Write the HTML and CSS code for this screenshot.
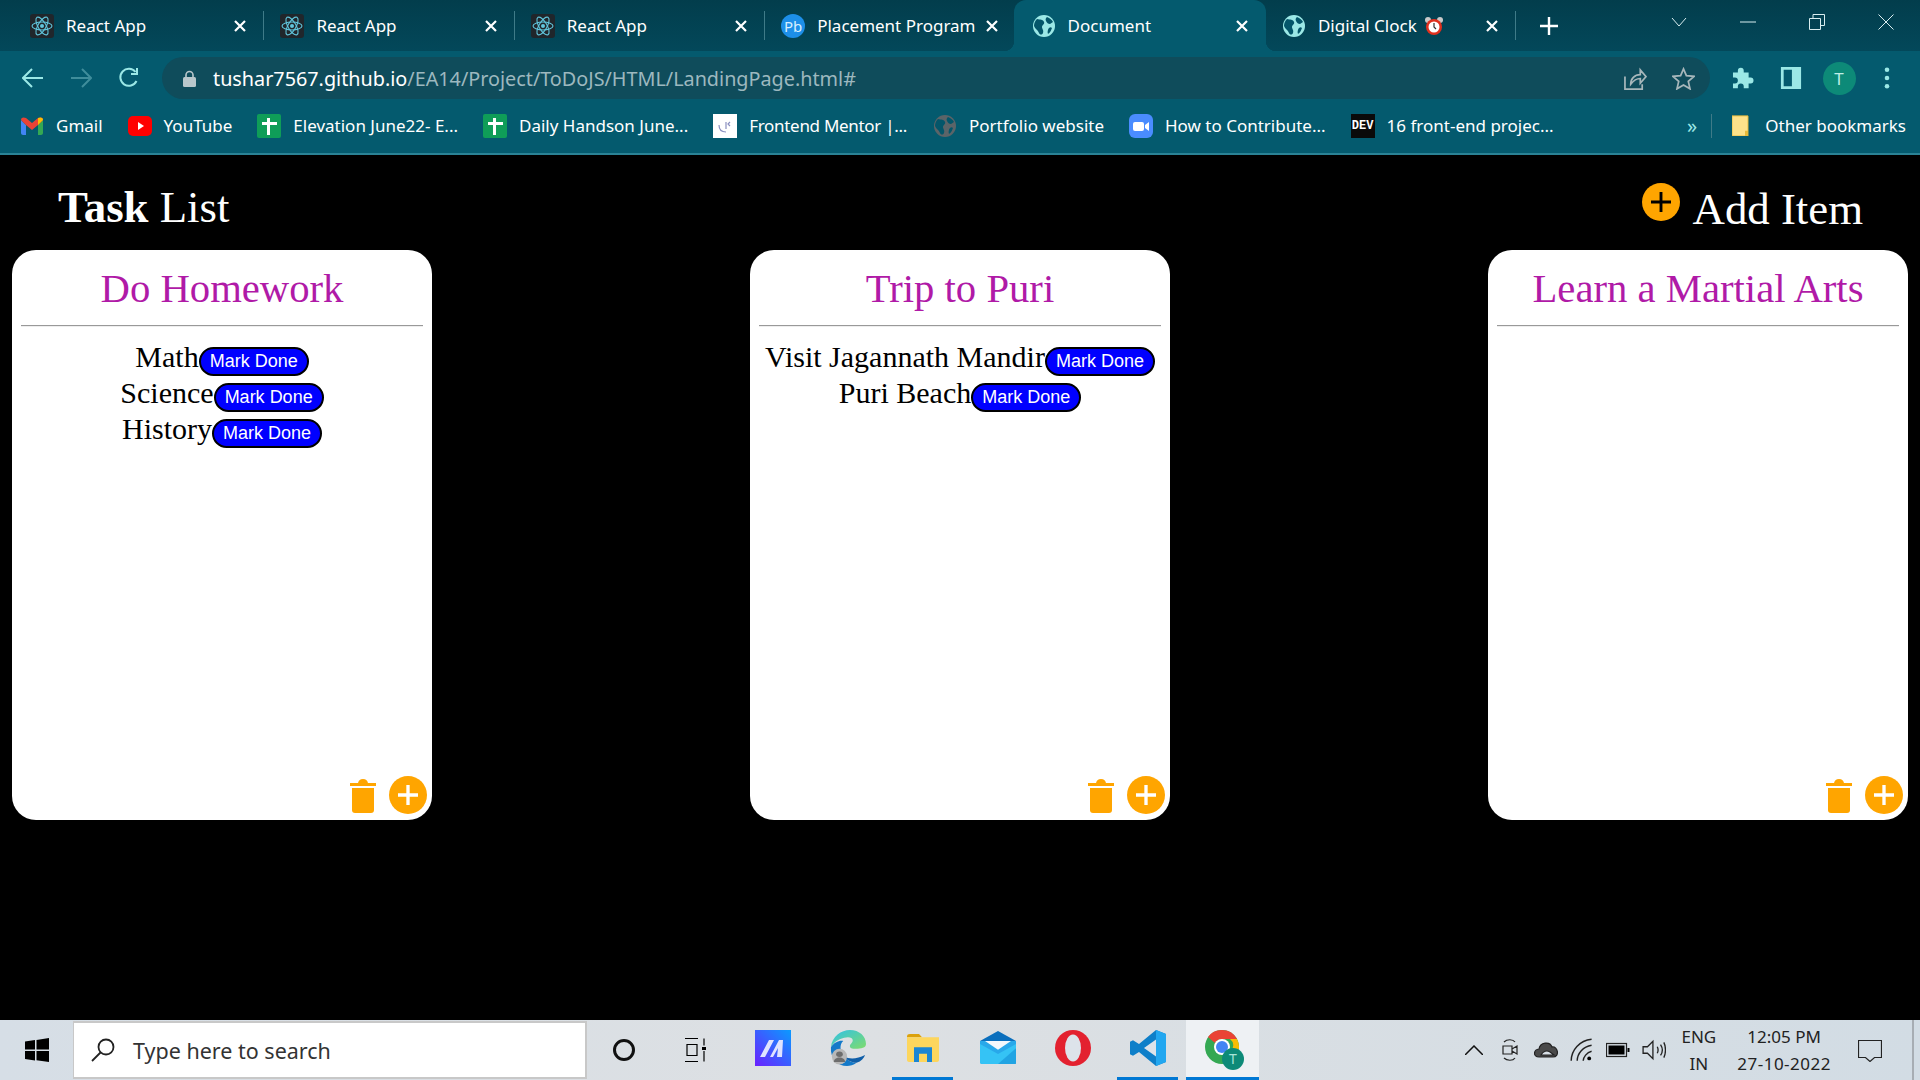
FILE: index.html
```html
<!DOCTYPE html>
<html lang="en">
<head>
    <meta charset="UTF-8">
    <title>Document</title>
    <link rel="stylesheet" href="styles.css">
</head>
<body>

    <svg class="icon-defs" width="0" height="0">
        <symbol id="react" viewBox="0 0 24 24">
            <rect width="24" height="24" rx="3" fill="#20262b"/>
            <g fill="none" stroke="#61c6dd" stroke-width="1.1">
                <ellipse cx="12" cy="12" rx="10" ry="4"/>
                <ellipse cx="12" cy="12" rx="10" ry="4" transform="rotate(60 12 12)"/>
                <ellipse cx="12" cy="12" rx="10" ry="4" transform="rotate(120 12 12)"/>
            </g>
            <circle cx="12" cy="12" r="2" fill="#61c6dd"/>
        </symbol>
        <symbol id="globe" viewBox="0 0 24 24">
            <circle cx="12" cy="12" r="11" fill="currentColor"/>
            <path d="M5 5c3 1 6 0 7 3 1 2-2 3-2 5 0 2 2 3 1 6-1 2-3 2-4 0-1-3-4-4-5-7 0-3 1-5 3-7zM15 3c3 1 5 3 6 5l-3 2c-2 0-3-1-4-3-1-2 0-3 1-4zM20 14c-1 2-1 4-4 6-1-2 0-5 1-6 1-1 2-1 3 0z" fill="#04566a"/>
        </symbol>
        <symbol id="sheet" viewBox="0 0 24 24">
            <rect width="24" height="24" rx="2" fill="#0f9d58"/>
            <rect x="5" y="8" width="15" height="3" fill="#fff"/>
            <rect x="10" y="4" width="3" height="17" fill="#fff"/>
        </symbol>
        <symbol id="trash" viewBox="0 0 26 35">
            <path d="M0 5h8c1-3 2-4 5-4s4 1 5 4h8v3H0z" fill="#ffa500"/>
            <path d="M2 10h22v22c0 2-1 3-3 3H5c-2 0-3-1-3-3z" fill="#ffa500"/>
        </symbol>
    </svg>

    <header class="browser">
        <div class="tabstrip">
            <div class="tab">
                <svg class="favicon"><use href="#react"/></svg>
                <span class="tab-title">React App</span>
                <svg class="tab-close" viewBox="0 0 12 12"><path d="M1 1l10 10M11 1L1 11"/></svg>
            </div>
            <span class="tab-sep"></span>
            <div class="tab">
                <svg class="favicon"><use href="#react"/></svg>
                <span class="tab-title">React App</span>
                <svg class="tab-close" viewBox="0 0 12 12"><path d="M1 1l10 10M11 1L1 11"/></svg>
            </div>
            <span class="tab-sep"></span>
            <div class="tab">
                <svg class="favicon"><use href="#react"/></svg>
                <span class="tab-title">React App</span>
                <svg class="tab-close" viewBox="0 0 12 12"><path d="M1 1l10 10M11 1L1 11"/></svg>
            </div>
            <span class="tab-sep"></span>
            <div class="tab">
                <span class="favicon pb-icon">Pb</span>
                <span class="tab-title">Placement Program</span>
                <svg class="tab-close" viewBox="0 0 12 12"><path d="M1 1l10 10M11 1L1 11"/></svg>
            </div>
            <span class="tab-sep hidden"></span>
            <div class="tab active">
                <svg class="favicon globe"><use href="#globe"/></svg>
                <span class="tab-title">Document</span>
                <svg class="tab-close" viewBox="0 0 12 12"><path d="M1 1l10 10M11 1L1 11"/></svg>
            </div>
            <span class="tab-sep hidden"></span>
            <div class="tab">
                <svg class="favicon globe"><use href="#globe"/></svg>
                <span class="tab-title">Digital Clock</span>
                <svg class="alarm" viewBox="0 0 20 20">
                    <circle cx="4" cy="4" r="3" fill="#c9c9c9"/>
                    <circle cx="16" cy="4" r="3" fill="#c9c9c9"/>
                    <circle cx="10" cy="11" r="8" fill="#e0301e"/>
                    <circle cx="10" cy="11" r="5.5" fill="#fff"/>
                    <path d="M10 7v4l2 2" stroke="#333" stroke-width="1.2" fill="none"/>
                </svg>
                <svg class="tab-close" viewBox="0 0 12 12"><path d="M1 1l10 10M11 1L1 11"/></svg>
            </div>
            <span class="tab-sep"></span>
            <svg class="new-tab" viewBox="0 0 18 18"><path d="M9 0v18M0 9h18"/></svg>

            <div class="window-controls">
                <span class="win-btn"><svg viewBox="0 0 16 10"><path d="M1 1l7 8 7-8"/></svg></span>
                <span class="win-btn"><svg viewBox="0 0 16 2"><path d="M0 1h16"/></svg></span>
                <span class="win-btn"><svg viewBox="0 0 16 16"><path d="M.5 4.5h11v11H.5zM4 4V.5h11.500v11H12"/></svg></span>
                <span class="win-btn"><svg viewBox="0 0 16 16"><path d="M.5.5l15 15M15.500.5l-15 15"/></svg></span>
            </div>
        </div>

        <div class="toolbar">
            <span class="tool-btn"><svg viewBox="0 0 22 20"><path d="M21 10H2M10 1l-9 9 9 9"/></svg></span>
            <span class="tool-btn dim"><svg viewBox="0 0 22 20"><path d="M1 10h19M12 1l9 9-9 9"/></svg></span>
            <span class="tool-btn"><svg viewBox="0 0 22 22"><path d="M18.500 14a8.500 8.500 0 1 1-1-9M19 1v6h-6"/></svg></span>

            <div class="address">
                <svg class="lock" viewBox="0 0 13 17"><path d="M3 7V5a3.500 3.500 0 0 1 7 0v2" fill="none" stroke="#b9c7cb" stroke-width="1.600"/><rect y="7" width="13" height="10" rx="1.500" fill="#b9c7cb"/></svg>
                <span class="url"><span class="url-host">tushar7567.github.io</span>/EA14/Project/ToDoJS/HTML/LandingPage.html#</span>
                <svg class="addr-icon" viewBox="0 0 24 24"><path d="M1 10v13h18v-5M7 18c0-6 4-10 10-10V3l6 7-6 7v-5c-4 0-7 2-10 6z"/></svg>
                <svg class="addr-icon star" viewBox="0 0 24 24"><path d="M12 2l3 7 8 .8-6 5.200 1.800 7.800L12 18.700 5.200 22.800 7 15 1 9.800 9 9z"/></svg>
            </div>

            <span class="tool-btn"><svg class="fill" viewBox="3 1.500 22.500 22"><path d="M4 7h5V5a3 3 0 0 1 6 0v2h5v5h2a3 3 0 0 1 0 6h-2v5h-5v-2a3 3 0 0 0-6 0v2H4v-5h2a3 3 0 0 0 0-6H4z"/></svg></span>
            <span class="tool-btn"><svg class="panel" viewBox="0 0 22 24"><path d="M0 0h22v24H0zM3 3v18h9V3z" fill-rule="evenodd"/></svg></span>
            <span class="tool-btn"><span class="avatar">T</span></span>
            <span class="tool-btn"><svg class="fill dots" viewBox="0 0 6 24"><circle cx="3" cy="3" r="2.500"/><circle cx="3" cy="12" r="2.500"/><circle cx="3" cy="21" r="2.500"/></svg></span>
        </div>

        <div class="bookmarks">
            <a class="bookmark">
                <svg class="bm-icon gmail" viewBox="0 0 22 18">
                    <path d="M0 3v13c0 1 1 2 2 2h3V8z" fill="#4285f4"/>
                    <path d="M22 3v13c0 1-1 2-2 2h-3V8z" fill="#34a853"/>
                    <path d="M0 3c0-3 3-3 5-2l6 5 6-5c2-1 5-1 5 2l-5 5-6 5-6-5z" fill="#ea4335"/>
                    <path d="M17 1c2-1 5-1 5 2l-5 5z" fill="#fbbc04"/>
                </svg>
                Gmail
            </a>
            <a class="bookmark">
                <svg class="bm-icon" viewBox="0 0 24 20">
                    <rect width="24" height="20" rx="5" fill="#f00"/>
                    <path d="M10 6l6 4-6 4z" fill="#fff"/>
                </svg>
                YouTube
            </a>
            <a class="bookmark"><svg class="bm-icon"><use href="#sheet"/></svg>Elevation June22- E...</a>
            <a class="bookmark"><svg class="bm-icon"><use href="#sheet"/></svg>Daily Handson June...</a>
            <a class="bookmark tight">
                <svg class="bm-icon" viewBox="0 0 24 24">
                    <rect width="24" height="24" fill="#fff"/>
                    <path d="M13 8v7M6 11c0 5 3 7 7 7M17 8l-2 2 2 2" fill="none" stroke="#8a8fc0" stroke-width="1.200"/>
                </svg>
                Frontend Mentor |...
            </a>
            <a class="bookmark"><svg class="bm-icon portfolio"><use href="#globe"/></svg>Portfolio website</a>
            <a class="bookmark">
                <svg class="bm-icon" viewBox="0 0 24 24">
                    <rect width="24" height="24" rx="6" fill="#4a8cff"/>
                    <rect x="4" y="8" width="11" height="9" rx="2" fill="#fff"/>
                    <path d="M16 11l4-3v9l-4-3z" fill="#fff"/>
                </svg>
                How to Contribute...
            </a>
            <a class="bookmark"><span class="bm-icon dev-icon">DEV</span>16 front-end projec...</a>

            <span class="bm-more">»</span>
            <span class="bm-sep"></span>
            <a class="bookmark other">
                <svg class="folder-icon" viewBox="0 0 17 24" preserveAspectRatio="none">
                    <path d="M0 1h16v23H0z" fill="#fde28a" stroke="#e8bb3a" stroke-width="1"/>
                    <path d="M13 24v-6h3v6z" fill="#e8bb3a"/>
                </svg>
                Other bookmarks
            </a>
        </div>
    </header>

    <main class="app">
        <div class="app-head">
            <h1 class="app-title"><b>Task</b> List</h1>
            <div class="add-item">
                <span class="add-circle"><svg viewBox="0 0 18 18"><path d="M9 0v18M0 9h18"/></svg></span>
                <span class="add-label">Add Item</span>
            </div>
        </div>

        <div class="board">
            <section class="card">
                <h2 class="card-title">Do Homework</h2>
                <hr class="card-rule">
                <div class="task-list">
                    <div class="task">Math<button class="done-btn">Mark Done</button></div>
                    <div class="task">Science<button class="done-btn">Mark Done</button></div>
                    <div class="task">History<button class="done-btn">Mark Done</button></div>
                </div>
                <div class="card-actions">
                    <svg class="trash"><use href="#trash"/></svg>
                    <span class="card-add"><svg viewBox="0 0 18 18"><path d="M9 0v18M0 9h18"/></svg></span>
                </div>
            </section>

            <section class="card">
                <h2 class="card-title">Trip to Puri</h2>
                <hr class="card-rule">
                <div class="task-list">
                    <div class="task">Visit Jagannath Mandir<button class="done-btn">Mark Done</button></div>
                    <div class="task">Puri Beach<button class="done-btn">Mark Done</button></div>
                </div>
                <div class="card-actions">
                    <svg class="trash"><use href="#trash"/></svg>
                    <span class="card-add"><svg viewBox="0 0 18 18"><path d="M9 0v18M0 9h18"/></svg></span>
                </div>
            </section>

            <section class="card">
                <h2 class="card-title">Learn a Martial Arts</h2>
                <hr class="card-rule">
                <div class="task-list"></div>
                <div class="card-actions">
                    <svg class="trash"><use href="#trash"/></svg>
                    <span class="card-add"><svg viewBox="0 0 18 18"><path d="M9 0v18M0 9h18"/></svg></span>
                </div>
            </section>
        </div>
    </main>

    <footer class="taskbar">
        <span class="start">
            <svg viewBox="0 0 24 24"><path d="M0 3.500l10-1.400V11.500H0zM11.500 1.900L24 0v11.500H11.500zM0 13h10v9.400L0 21zM11.500 13H24v11l-12.500-1.800z" fill="#000"/></svg>
        </span>
        <div class="search">
            <svg class="search-glass" viewBox="0 0 24 24"><circle cx="15" cy="9" r="7.500"/><path d="M9.500 14.500L1 23"/></svg>
            <span>Type here to search</span>
        </div>

        <span class="cortana"></span>
        <span class="taskview">
            <svg viewBox="0 0 24 24"><path d="M1 .5h13M1 23.500h13M3 6.500h10v11H3zM1 3v0M20 .5v7M20 13v10.500"/><rect x="18" y="9" width="4" height="3" fill="#000" stroke="none"/></svg>
        </span>

        <div class="apps">
            <span class="app-slot">
                <svg viewBox="0 0 36 36" preserveAspectRatio="none">
                    <defs><linearGradient id="mGrad" x1="1" y1="0" x2="0" y2="1"><stop offset="0" stop-color="#0a9bff"/><stop offset="1" stop-color="#6a20ff"/></linearGradient></defs>
                    <rect width="36" height="36" fill="url(#mGrad)"/>
                    <path d="M5 27l9-17h5l-9 17zM15 27l9-17h4l-1 17h-5l1-9-5 9z" fill="#dfe3ff"/>
                </svg>
            </span>
            <span class="app-slot">
                <svg viewBox="0 0 38 46" preserveAspectRatio="none">
                    <defs><linearGradient id="edgeGrad" x1="0" y1="0" x2="1" y2="1"><stop offset="0" stop-color="#2fc1e8"/><stop offset="1" stop-color="#7fdc6c"/></linearGradient></defs>
                    <path d="M1 22C2 8 12 0 21 0c10 0 17 8 17 18 0 5-5 6-11 6-4 0-6-1-6-3 0-4 3-4 3-8 0-3-4-5-9-3C8 12 4 16 1 22z" fill="url(#edgeGrad)"/>
                    <path d="M1 22c3-6 9-9 13-8-4 4-4 13 1 20 4 6 9 8 13 8-3 3-7 4-10 4C8 46 0 36 1 22z" fill="#1379c9"/>
                    <path d="M28 42c-5 0-10-3-13-8 6 4 14 3 22-2-1 4-4 8-9 10z" fill="#0f5ea8"/>
                    <ellipse cx="10" cy="34" rx="8" ry="10" fill="#b8b8b8"/>
                    <circle cx="10" cy="31" r="3.500" fill="#6d6d6d"/>
                    <path d="M4 41c0-4 3-6 6-6s6 2 6 6z" fill="#6d6d6d"/>
                </svg>
            </span>
            <span class="app-slot open">
                <svg class="explorer-icon" viewBox="0 0 32 34" preserveAspectRatio="none">
                    <path d="M0 3c0-2 1-3 3-3h9l3 4H0z" fill="#dba10c"/>
                    <path d="M0 4h32v28c0 1-1 2-2 2H2c-1 0-2-1-2-2z" fill="#fdd65d"/>
                    <path d="M7 16h18v18h-5v-10h-8v10H7z" fill="#1b86d4"/>
                </svg>
            </span>
            <span class="app-slot">
                <svg class="mail-icon" viewBox="0 0 36 46" preserveAspectRatio="none">
                    <path d="M18 0l18 14H0z" fill="#0b6fbd"/>
                    <path d="M0 14h36v30c0 1-1 2-2 2H2c-1 0-2-1-2-2z" fill="#28a8ea"/>
                    <path d="M5 14h26L18 26z" fill="#f3f8fc"/>
                    <path d="M0 18l18 14 18-14v26c0 1-1 2-2 2H2c-1 0-2-1-2-2z" fill="#35c3f5"/>
                    <path d="M36 18v28H18L36 24z" fill="#1997db" opacity=".7"/>
                </svg>
            </span>
            <span class="app-slot">
                <svg viewBox="0 0 36 40" preserveAspectRatio="none">
                    <ellipse cx="18" cy="20" rx="18" ry="20" fill="#e3212f"/>
                    <ellipse cx="18" cy="20" rx="8" ry="15" fill="#dde3ea"/>
                </svg>
            </span>
            <span class="app-slot open">
                <svg viewBox="0 0 36 46" preserveAspectRatio="none">
                    <path d="M26 0l10 5v36l-10 5-17-18-6 5-3-2v-16l3-2 6 5z" fill="#0e7fc9"/>
                    <path d="M26 0l10 5v36l-10 5z" fill="#22a7f0"/>
                    <path d="M26 12L14 23l12 11z" fill="#dde3ea"/>
                </svg>
            </span>
            <span class="app-slot active">
                <svg class="chrome-icon" viewBox="0 0 40 40">
                    <circle cx="17" cy="17" r="17" fill="#34a853"/>
                    <path d="M17 0a17 17 0 0 1 15 9H17a8 8 0 0 0-7 4L3 7A17 17 0 0 1 17 0z" fill="#ea4335"/>
                    <path d="M32 9a17 17 0 0 1-13 25l7-13a8 8 0 0 0-1-12z" fill="#fbbc04"/>
                    <circle cx="17" cy="17" r="8" fill="#fff"/>
                    <circle cx="17" cy="17" r="6" fill="#4285f4"/>
                    <circle cx="28" cy="29" r="11" fill="#0d8a78"/>
                    <text x="28" y="34" text-anchor="middle" class="chrome-t">T</text>
                </svg>
            </span>
        </div>

        <div class="tray">
            <svg class="tray-chevron" viewBox="0 0 18 10"><path d="M0 10l9-9 9 9"/></svg>
            <svg class="tray-icon" viewBox="0 0 18 24"><path d="M2 8h9v8H2zM11 11l5-3v8l-5-3M3 4c3-3 9-3 11 0M3 20c3 3 9 3 11 0"/></svg>
            <svg class="tray-icon cloud" viewBox="0 0 24 16"><path d="M5 15c-6 0-6-7 0-8 1-7 11-8 13-2 6-1 8 10 1 10z" fill="#4a4a4a"/><path d="M7 13c2-4 6-5 9-3l4 3z" fill="#d8dfe6"/></svg>
            <svg class="tray-icon" viewBox="0 0 20 20"><path d="M1 19C1 10 8 2 18 1M6 19c0-6 5-12 12-13M11 19c0-3 3-7 7-8"/><circle cx="16" cy="17" r="1.600" fill="#000" stroke="none"/></svg>
            <svg class="tray-icon" viewBox="0 0 24 14"><rect x=".5" y=".5" width="20" height="13" fill="none"/><rect x="2.500" y="2.500" width="16" height="9" fill="#000" stroke="none"/><rect x="21.500" y="5" width="2" height="4" fill="#000" stroke="none"/></svg>
            <svg class="tray-icon" viewBox="0 0 22 20"><path d="M1 7h4l5-5v16l-5-5H1zM14 7c1 2 1 4 0 6M17 5c2 3 2 7 0 10M20 3c2 4 2 10 0 14"/></svg>
            <div class="tray-lang"><span>ENG</span><span>IN</span></div>
            <div class="tray-clock"><span>12:05 PM</span><span class="tray-date">27-10-2022</span></div>
            <svg class="tray-notify" viewBox="0 0 24 24"><path d="M.5 2.500h23v17h-7l-4.500 4-4.500-4h-7z"/></svg>
        </div>
    </footer>

</body>
</html>
```

FILE: styles.css
```css
* {
    box-sizing: border-box;
}
html, body {
    margin: 0;
    height: 100%;
}
body {
    display: flex;
    flex-direction: column;
    height: 1080px;
    overflow: hidden;
    background: #000;
    font-family: "Liberation Serif", serif;
}
.icon-defs {
    position: absolute;
}

/* browser top */
.browser {
    font-family: "Noto Sans", sans-serif;
    color: #fff;
    background: #045a6e;
}
.tabstrip {
    display: flex;
    align-items: center;
    height: 51px;
    padding-left: 14px;
    background: linear-gradient(#023d4c, #03485a);
}
.tab {
    position: relative;
    display: flex;
    align-items: center;
    width: 249.4px;
    height: 51px;
    padding: 0 17px 0 16px;
    font-size: 17px;
}
.tab.active {
    width: 252.4px;
    margin: 0 -1px 0 -2px;
    padding: 0 18px 0 18px;
    background: #045a6e;
    border-radius: 12px 12px 0 0;
}
.tab.active::before,
.tab.active::after {
    content: "";
    position: absolute;
    bottom: 0;
    width: 10px;
    height: 10px;
    background: radial-gradient(circle at 0 0, transparent 10px, #045a6e 10.500px);
}
.tab.active::before {
    left: -10px;
}
.tab.active::after {
    right: -10px;
    transform: scaleX(-1);
}
.favicon {
    flex: none;
    width: 24px;
    height: 24px;
    margin-right: 12px;
}
.globe {
    color: #9be8e6;
}
.pb-icon {
    display: flex;
    align-items: center;
    justify-content: center;
    border-radius: 50%;
    background: #1d8fe8;
    color: #d7efff;
    font-size: 15px;
}
.tab-title {
    white-space: nowrap;
}
.alarm {
    width: 20px;
    height: 20px;
    margin-left: 7px;
}
.tab-close {
    flex: none;
    width: 12px;
    height: 12px;
    margin-left: auto;
    fill: none;
    stroke: #fff;
    stroke-width: 2.200;
}
.tab-sep {
    flex: none;
    width: 1px;
    height: 29px;
    background: #3f7b88;
}
.tab-sep.hidden {
    background: transparent;
}
.new-tab {
    flex: none;
    width: 18px;
    height: 18px;
    margin-left: 24px;
    fill: none;
    stroke: #fff;
    stroke-width: 2.400;
}
.window-controls {
    display: flex;
    align-self: flex-start;
    margin-left: auto;
}
.win-btn {
    display: flex;
    align-items: center;
    justify-content: center;
    width: 69px;
    height: 44px;
}
.win-btn svg {
    width: 16px;
    height: 16px;
    fill: none;
    stroke: #d9eef0;
    stroke-width: 1;
}

.toolbar {
    display: flex;
    align-items: center;
    height: 59px;
    padding: 0 9px 5px;
}
.tool-btn {
    display: flex;
    flex: none;
    align-items: center;
    justify-content: center;
    width: 48px;
    height: 42px;
}
.tool-btn svg {
    width: 22px;
    height: 22px;
    fill: none;
    stroke: #9be8e6;
    stroke-width: 2;
}
.tool-btn.dim svg {
    stroke: #3f8d9b;
}
.tool-btn svg.fill {
    fill: #9be8e6;
    stroke: none;
}
.tool-btn svg.panel {
    fill: #9be8e6;
    stroke: none;
}
.tool-btn svg.dots {
    width: 6px;
}
.avatar {
    display: flex;
    align-items: center;
    justify-content: center;
    width: 33px;
    height: 33px;
    border-radius: 50%;
    background: #0d8a78;
    color: #bfeee6;
    font-size: 17px;
}
.address {
    display: flex;
    flex: 1;
    align-items: center;
    height: 42px;
    margin: 0 9px;
    padding: 0 15px 0 21px;
    border-radius: 21px;
    background: #0f4c5b;
    font-size: 19.800px;
    color: #9db8bf;
}
.lock {
    flex: none;
    width: 13px;
    height: 17px;
    margin-right: 17px;
}
.url {
    flex: 1;
    white-space: nowrap;
}
.url-host {
    color: #fff;
}
.addr-icon {
    flex: none;
    width: 23px;
    height: 23px;
    margin-left: 25px;
    fill: none;
    stroke: #a7b7bb;
    stroke-width: 1.800;
}

.bookmarks {
    display: flex;
    align-items: center;
    height: 45px;
    padding: 0 14px 12px 21px;
    border-bottom: 2px solid #2a8295;
    font-size: 17px;
}
.bookmark {
    display: flex;
    align-items: center;
    margin-right: 25px;
    white-space: nowrap;
}
.bookmark.tight {
    margin-right: 26px;
    letter-spacing: -.3px;
}
.bm-icon {
    flex: none;
    width: 24px;
    height: 24px;
    margin-right: 12px;
}
.gmail {
    width: 22px;
    margin-right: 13px;
}
.portfolio {
    color: #5b6468;
}
.dev-icon {
    display: flex;
    align-items: center;
    justify-content: center;
    background: #0a0a0a;
    font-family: "Liberation Mono", monospace;
    font-size: 12px;
    font-weight: bold;
}
.bm-more {
    margin-left: auto;
    color: #9be8e6;
    font-size: 20px;
}
.bm-sep {
    width: 1px;
    height: 24px;
    margin: 0 20px 0 14px;
    background: #3f7b88;
}
.bookmark.other {
    margin-right: 0;
}
.folder-icon {
    width: 17px;
    height: 21px;
    margin-right: 16px;
}

/* the page */
.app {
    flex: 1;
    min-height: 0;
    display: flex;
    flex-direction: column;
    padding: 0 12px;
    color: #fff;
}
.app-head {
    display: flex;
    justify-content: space-between;
    height: 95px;
}
.app-title {
    margin: 26px 0 0 46px;
    font-size: 44.800px;
    font-weight: normal;
    line-height: 52px;
}
.add-item {
    display: flex;
    align-items: flex-start;
    margin-right: 45px;
}
.add-circle {
    display: flex;
    align-items: center;
    justify-content: center;
    width: 38px;
    height: 38px;
    margin: 28px 13px 0 0;
    border-radius: 50%;
    background: #ffa500;
}
.add-circle svg {
    width: 20px;
    height: 20px;
    fill: none;
    stroke: #000;
    stroke-width: 2.600;
}
.add-label {
    margin-top: 28px;
    font-size: 44.800px;
    line-height: 52px;
}
.board {
    display: flex;
    justify-content: space-between;
}
.card {
    display: flex;
    flex-direction: column;
    width: 420px;
    height: 570px;
    padding: 0 9px;
    border-radius: 24px;
    background: #fff;
    color: #000;
    text-align: center;
}
.card-title {
    margin: 15px 0 0;
    color: #b01aa7;
    font-size: 40.700px;
    font-weight: normal;
    line-height: 48px;
}
.card-rule {
    width: 100%;
    margin: 12px 0 12px;
    border: 0;
    border-top: 1px solid #999;
    border-bottom: 1px solid #eee;
}
.task-list {
    flex: 1;
}
.task {
    height: 36px;
    font-size: 30px;
    line-height: 35px;
}
.done-btn {
    height: 29px;
    padding: 0 9px;
    border: 2px solid #000;
    border-radius: 15px;
    background: #0000ff;
    color: #fff;
    font-family: "Liberation Sans", sans-serif;
    font-size: 18px;
}
.card-actions {
    display: flex;
    align-items: center;
    justify-content: flex-end;
    gap: 13px;
    margin: 0 -4px 6px 0;
}
.trash {
    width: 26px;
    height: 35px;
}
.card-add {
    display: flex;
    align-items: center;
    justify-content: center;
    width: 38px;
    height: 38px;
    border-radius: 50%;
    background: #ffa500;
}
.card-add svg {
    width: 20px;
    height: 20px;
    fill: none;
    stroke: #fff;
    stroke-width: 3;
}

/* windows taskbar */
.taskbar {
    display: flex;
    align-items: center;
    flex: none;
    height: 60px;
    background: linear-gradient(90deg, #d6dee6, #dde0e3 45%, #d2dce4);
    font-family: "Noto Sans", sans-serif;
    color: #222;
}
.start {
    display: flex;
    align-items: center;
    justify-content: center;
    flex: none;
    width: 73px;
}
.start svg {
    width: 24px;
    height: 24px;
}
.search {
    display: flex;
    align-items: center;
    flex: none;
    width: 514px;
    height: 58px;
    padding-left: 17px;
    border: 2px solid #c8c8c8;
    border-left-width: 1px;
    background: #fff;
    font-size: 21.500px;
    color: #333;
}
.search-glass {
    width: 24px;
    height: 24px;
    margin-right: 18px;
    fill: none;
    stroke: #222;
    stroke-width: 1.800;
}
.cortana {
    flex: none;
    width: 22px;
    height: 22px;
    margin-left: 26px;
    border: 3px solid #111;
    border-radius: 50%;
}
.taskview {
    display: flex;
    flex: none;
    justify-content: center;
    width: 24px;
    margin-left: 49px;
}
.taskview svg {
    width: 24px;
    height: 24px;
    fill: none;
    stroke: #000;
    stroke-width: 1.200;
}
.apps {
    display: flex;
    align-self: stretch;
    margin-left: 27px;
}
.app-slot {
    display: flex;
    align-items: center;
    justify-content: center;
    width: 61px;
    margin: 0 7px;
    padding-bottom: 2px;
    border-bottom: 3px solid transparent;
}
.app-slot svg {
    flex: none;
    width: 36px;
    height: 36px;
}
.app-slot svg.explorer-icon {
    width: 32px;
    height: 28px;
}
.app-slot svg.mail-icon {
    height: 33px;
}
.app-slot.open {
    border-bottom-color: #0078d4;
}
.app-slot.active {
    width: 73px;
    margin: 0 0 0 1px;
    padding-left: 4px;
    background: #eef1f4;
    border-bottom-color: #0078d4;
}
.app-slot svg.chrome-icon {
    width: 40px;
    height: 40px;
    margin-top: 4px;
}
.chrome-t {
    fill: #a8e4d8;
    font-family: "Noto Sans", sans-serif;
    font-size: 14px;
}
.tray {
    display: flex;
    align-items: center;
    height: 60px;
    margin-left: auto;
    padding-right: 30px;
    border-right: 2px solid #a7adb3;
    margin-right: 6px;
}
.tray-chevron {
    width: 18px;
    height: 10px;
    fill: none;
    stroke: #111;
    stroke-width: 1.500;
}
.tray-icon {
    width: 24px;
    height: 24px;
    margin-left: 12px;
    fill: none;
    stroke: #222;
    stroke-width: 1.200;
}
.tray-chevron + .tray-icon {
    margin-left: 15px;
}
.tray-lang,
.tray-clock {
    display: flex;
    flex-direction: column;
    align-items: center;
    gap: 3px;
    font-size: 17px;
    line-height: 24px;
}
.tray-lang {
    margin-left: 16px;
}
.tray-clock {
    margin-left: 21px;
}
.tray-date {
    letter-spacing: .5px;
}
.tray-notify {
    width: 24px;
    height: 24px;
    margin-left: 27px;
    fill: none;
    stroke: #222;
    stroke-width: 1.200;
}
```
